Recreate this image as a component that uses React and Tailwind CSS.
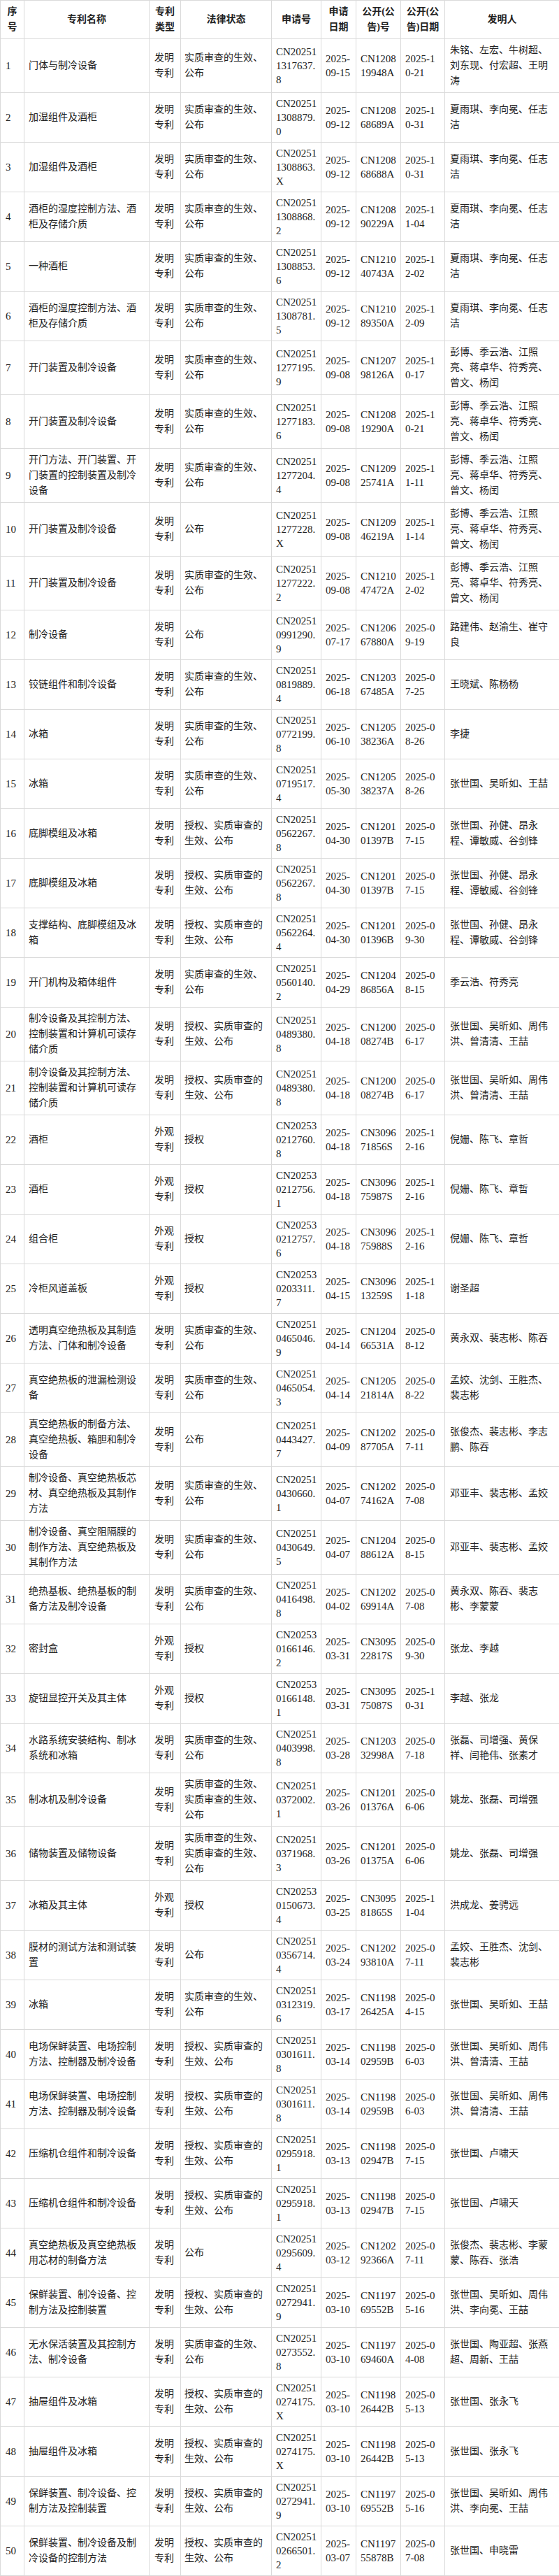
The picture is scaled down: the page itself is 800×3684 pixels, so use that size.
const T = { F: '发明专利', W: '外观专利' };
const L = {
  A: '实质审查的生效、公布',
  B: '授权、实质审查的生效、公布',
  P: '公布',
  G: '授权',
  D: '实质审查的生效、实质审查的生效、公布',
};

const P1 = '彭博、季云浩、江照亮、蒋卓华、符秀亮、曾文、杨闰';
const X1 = '夏雨琪、李向冕、任志洁';
const Z1 = '张世国、孙健、昂永程、谭敏威、谷剑锋';
const Z2 = '张世国、吴昕如、周伟洪、曾清清、王喆';
const Z3 = '张世国、吴昕如、周伟洪、李向冕、王喆';
const N1 = '倪姗、陈飞、章哲';

const rows = [
  ['门体与制冷设备', 'F', 'A', 'CN202511317637.8', '2025-09-15', 'CN120819948A', '2025-10-21', '朱铭、左宏、牛树超、刘东现、付宏超、王明涛'],
  ['加湿组件及酒柜', 'F', 'A', 'CN202511308879.0', '2025-09-12', 'CN120868689A', '2025-10-31', X1],
  ['加湿组件及酒柜', 'F', 'A', 'CN202511308863.X', '2025-09-12', 'CN120868688A', '2025-10-31', X1],
  ['酒柜的湿度控制方法、酒柜及存储介质', 'F', 'A', 'CN202511308868.2', '2025-09-12', 'CN120890229A', '2025-11-04', X1],
  ['一种酒柜', 'F', 'A', 'CN202511308853.6', '2025-09-12', 'CN121040743A', '2025-12-02', X1],
  ['酒柜的湿度控制方法、酒柜及存储介质', 'F', 'A', 'CN202511308781.5', '2025-09-12', 'CN121089350A', '2025-12-09', X1],
  ['开门装置及制冷设备', 'F', 'A', 'CN202511277195.9', '2025-09-08', 'CN120798126A', '2025-10-17', P1],
  ['开门装置及制冷设备', 'F', 'A', 'CN202511277183.6', '2025-09-08', 'CN120819290A', '2025-10-21', P1],
  ['开门方法、开门装置、开门装置的控制装置及制冷设备', 'F', 'A', 'CN202511277204.4', '2025-09-08', 'CN120925741A', '2025-11-11', P1],
  ['开门装置及制冷设备', 'F', 'P', 'CN202511277228.X', '2025-09-08', 'CN120946219A', '2025-11-14', P1],
  ['开门装置及制冷设备', 'F', 'A', 'CN202511277222.2', '2025-09-08', 'CN121047472A', '2025-12-02', P1],
  ['制冷设备', 'F', 'P', 'CN202510991290.9', '2025-07-17', 'CN120667880A', '2025-09-19', '路建伟、赵渝生、崔守良'],
  ['铰链组件和制冷设备', 'F', 'A', 'CN202510819889.4', '2025-06-18', 'CN120367485A', '2025-07-25', '王晓斌、陈杨杨'],
  ['冰箱', 'F', 'A', 'CN202510772199.8', '2025-06-10', 'CN120538236A', '2025-08-26', '李捷'],
  ['冰箱', 'F', 'A', 'CN202510719517.4', '2025-05-30', 'CN120538237A', '2025-08-26', '张世国、吴昕如、王喆'],
  ['底脚模组及冰箱', 'F', 'B', 'CN202510562267.8', '2025-04-30', 'CN120101397B', '2025-07-15', Z1],
  ['底脚模组及冰箱', 'F', 'B', 'CN202510562267.8', '2025-04-30', 'CN120101397B', '2025-07-15', Z1],
  ['支撑结构、底脚模组及冰箱', 'F', 'B', 'CN202510562264.4', '2025-04-30', 'CN120101396B', '2025-09-30', Z1],
  ['开门机构及箱体组件', 'F', 'A', 'CN202510560140.2', '2025-04-29', 'CN120486856A', '2025-08-15', '季云浩、符秀亮'],
  ['制冷设备及其控制方法、控制装置和计算机可读存储介质', 'F', 'B', 'CN202510489380.8', '2025-04-18', 'CN120008274B', '2025-06-17', Z2],
  ['制冷设备及其控制方法、控制装置和计算机可读存储介质', 'F', 'B', 'CN202510489380.8', '2025-04-18', 'CN120008274B', '2025-06-17', Z2],
  ['酒柜', 'W', 'G', 'CN202530212760.8', '2025-04-18', 'CN309671856S', '2025-12-16', N1],
  ['酒柜', 'W', 'G', 'CN202530212756.1', '2025-04-18', 'CN309675987S', '2025-12-16', N1],
  ['组合柜', 'W', 'G', 'CN202530212757.6', '2025-04-18', 'CN309675988S', '2025-12-16', N1],
  ['冷柜风道盖板', 'W', 'G', 'CN202530203311.7', '2025-04-15', 'CN309613259S', '2025-11-18', '谢圣超'],
  ['透明真空绝热板及其制造方法、门体和制冷设备', 'F', 'A', 'CN202510465046.9', '2025-04-14', 'CN120466531A', '2025-08-12', '黄永双、裴志彬、陈吞'],
  ['真空绝热板的泄漏检测设备', 'F', 'A', 'CN202510465054.3', '2025-04-14', 'CN120521814A', '2025-08-22', '孟姣、沈剑、王胜杰、裴志彬'],
  ['真空绝热板的制备方法、真空绝热板、箱胆和制冷设备', 'F', 'P', 'CN202510443427.7', '2025-04-09', 'CN120287705A', '2025-07-11', '张俊杰、裴志彬、李志鹏、陈吞'],
  ['制冷设备、真空绝热板芯材、真空绝热板及其制作方法', 'F', 'A', 'CN202510430660.1', '2025-04-07', 'CN120274162A', '2025-07-08', '邓亚丰、裴志彬、孟姣'],
  ['制冷设备、真空阻隔膜的制作方法、真空绝热板及其制作方法', 'F', 'A', 'CN202510430649.5', '2025-04-07', 'CN120488612A', '2025-08-15', '邓亚丰、裴志彬、孟姣'],
  ['绝热基板、绝热基板的制备方法及制冷设备', 'F', 'A', 'CN202510416498.8', '2025-04-02', 'CN120269914A', '2025-07-08', '黄永双、陈吞、裴志彬、李蒙蒙'],
  ['密封盒', 'W', 'G', 'CN202530166146.2', '2025-03-31', 'CN309522817S', '2025-09-30', '张龙、李越'],
  ['旋钮显控开关及其主体', 'W', 'G', 'CN202530166148.1', '2025-03-31', 'CN309575087S', '2025-10-31', '李越、张龙'],
  ['水路系统安装结构、制冰系统和冰箱', 'F', 'A', 'CN202510403998.8', '2025-03-28', 'CN120332998A', '2025-07-18', '张磊、司增强、黄保祥、闫艳伟、张素才'],
  ['制冰机及制冷设备', 'F', 'D', 'CN202510372002.1', '2025-03-26', 'CN120101376A', '2025-06-06', '姚龙、张磊、司增强'],
  ['储物装置及储物设备', 'F', 'D', 'CN202510371968.3', '2025-03-26', 'CN120101375A', '2025-06-06', '姚龙、张磊、司增强'],
  ['冰箱及其主体', 'W', 'G', 'CN202530150673.4', '2025-03-25', 'CN309581865S', '2025-11-04', '洪成龙、姜骋远'],
  ['膜材的测试方法和测试装置', 'F', 'P', 'CN202510356714.4', '2025-03-24', 'CN120293810A', '2025-07-11', '孟姣、王胜杰、沈剑、裴志彬'],
  ['冰箱', 'F', 'A', 'CN202510312319.6', '2025-03-17', 'CN119826425A', '2025-04-15', '张世国、吴昕如、王喆'],
  ['电场保鲜装置、电场控制方法、控制器及制冷设备', 'F', 'B', 'CN202510301611.8', '2025-03-14', 'CN119802959B', '2025-06-03', Z2],
  ['电场保鲜装置、电场控制方法、控制器及制冷设备', 'F', 'B', 'CN202510301611.8', '2025-03-14', 'CN119802959B', '2025-06-03', Z2],
  ['压缩机仓组件和制冷设备', 'F', 'B', 'CN202510295918.1', '2025-03-13', 'CN119802947B', '2025-07-15', '张世国、卢啸天'],
  ['压缩机仓组件和制冷设备', 'F', 'B', 'CN202510295918.1', '2025-03-13', 'CN119802947B', '2025-07-15', '张世国、卢啸天'],
  ['真空绝热板及真空绝热板用芯材的制备方法', 'F', 'P', 'CN202510295609.4', '2025-03-12', 'CN120292366A', '2025-07-11', '张俊杰、裴志彬、李蒙蒙、陈吞、张浩'],
  ['保鲜装置、制冷设备、控制方法及控制装置', 'F', 'B', 'CN202510272941.9', '2025-03-10', 'CN119769552B', '2025-05-16', Z3],
  ['无水保活装置及其控制方法、制冷设备', 'F', 'A', 'CN202510273552.8', '2025-03-10', 'CN119769460A', '2025-04-08', '张世国、陶亚超、张燕超、周新、王喆'],
  ['抽屉组件及冰箱', 'F', 'B', 'CN202510274175.X', '2025-03-10', 'CN119826442B', '2025-05-13', '张世国、张永飞'],
  ['抽屉组件及冰箱', 'F', 'B', 'CN202510274175.X', '2025-03-10', 'CN119826442B', '2025-05-13', '张世国、张永飞'],
  ['保鲜装置、制冷设备、控制方法及控制装置', 'F', 'B', 'CN202510272941.9', '2025-03-10', 'CN119769552B', '2025-05-16', Z3],
  ['保鲜装置、制冷设备及制冷设备的控制方法', 'F', 'B', 'CN202510266501.2', '2025-03-07', 'CN119755878B', '2025-07-08', '张世国、申晓雷'],
];

const tall = new Set([1, 7, 8, 9, 10, 11, 20, 21, 28, 29, 30, 35, 36]);

const td = 'border border-[#dadada] align-middle text-left';
const cjk = 'text-[14px] leading-[22px]';
const lat = 'text-[15px] leading-[20px] break-all';
const th = 'border border-[#dadada] align-middle text-center font-bold text-[14px] leading-[22px] whitespace-nowrap px-0';

export default function App() {
  return (
    <div className="w-[800px] bg-white text-[#222] font-['Liberation_Serif','Noto_Sans_CJK_SC',serif]">
      <table className="w-[800px] table-fixed border-collapse">
        <colgroup>
          <col className="w-[34px]" />
          <col className="w-[179px]" />
          <col className="w-[45px]" />
          <col className="w-[130px]" />
          <col className="w-[71px]" />
          <col className="w-[50px]" />
          <col className="w-[64px]" />
          <col className="w-[63px]" />
          <col className="w-[164px]" />
        </colgroup>
        <thead>
          <tr className="h-[55px]">
            <th className={th}>序<br />号</th>
            <th className={th}>专利名称</th>
            <th className={th}>专利<br />类型</th>
            <th className={th}>法律状态</th>
            <th className={th}>申请号</th>
            <th className={th}>申请<br />日期</th>
            <th className={th}>公开(公<br />告)号</th>
            <th className={th}>公开(公<br />告)日期</th>
            <th className={th}>发明人</th>
          </tr>
        </thead>
        <tbody>
          {rows.map((r, i) => {
            const n = i + 1;
            return (
              <tr key={n} className={tall.has(n) ? 'h-[77px]' : 'h-[71px]'}>
                <td className={`${td} ${lat} pl-[7px] pr-[2px] py-0`}>{n}</td>
                <td className={`${td} ${cjk} pl-[6px] pr-[8px] py-0`}>{r[0]}</td>
                <td className={`${td} ${cjk} pl-[7px] pr-[7px] py-0`}>{T[r[1]]}</td>
                <td className={`${td} ${cjk} pl-[5px] pr-[7px] py-0`}>{L[r[2]]}</td>
                <td className={`${td} ${lat} pl-[6px] pr-[5px] py-0`}>{r[3]}</td>
                <td className={`${td} ${lat} pl-[6px] pr-[6px] py-0`}>{r[4]}</td>
                <td className={`${td} ${lat} pl-[6px] pr-[4px] py-0`}>{r[5]}</td>
                <td className={`${td} ${lat} pl-[6px] pr-[11px] py-0`}>{r[6]}</td>
                <td className={`${td} ${cjk} pl-[7px] pr-[9px] py-0`}>{r[7]}</td>
              </tr>
            );
          })}
        </tbody>
      </table>
    </div>
  );
}
